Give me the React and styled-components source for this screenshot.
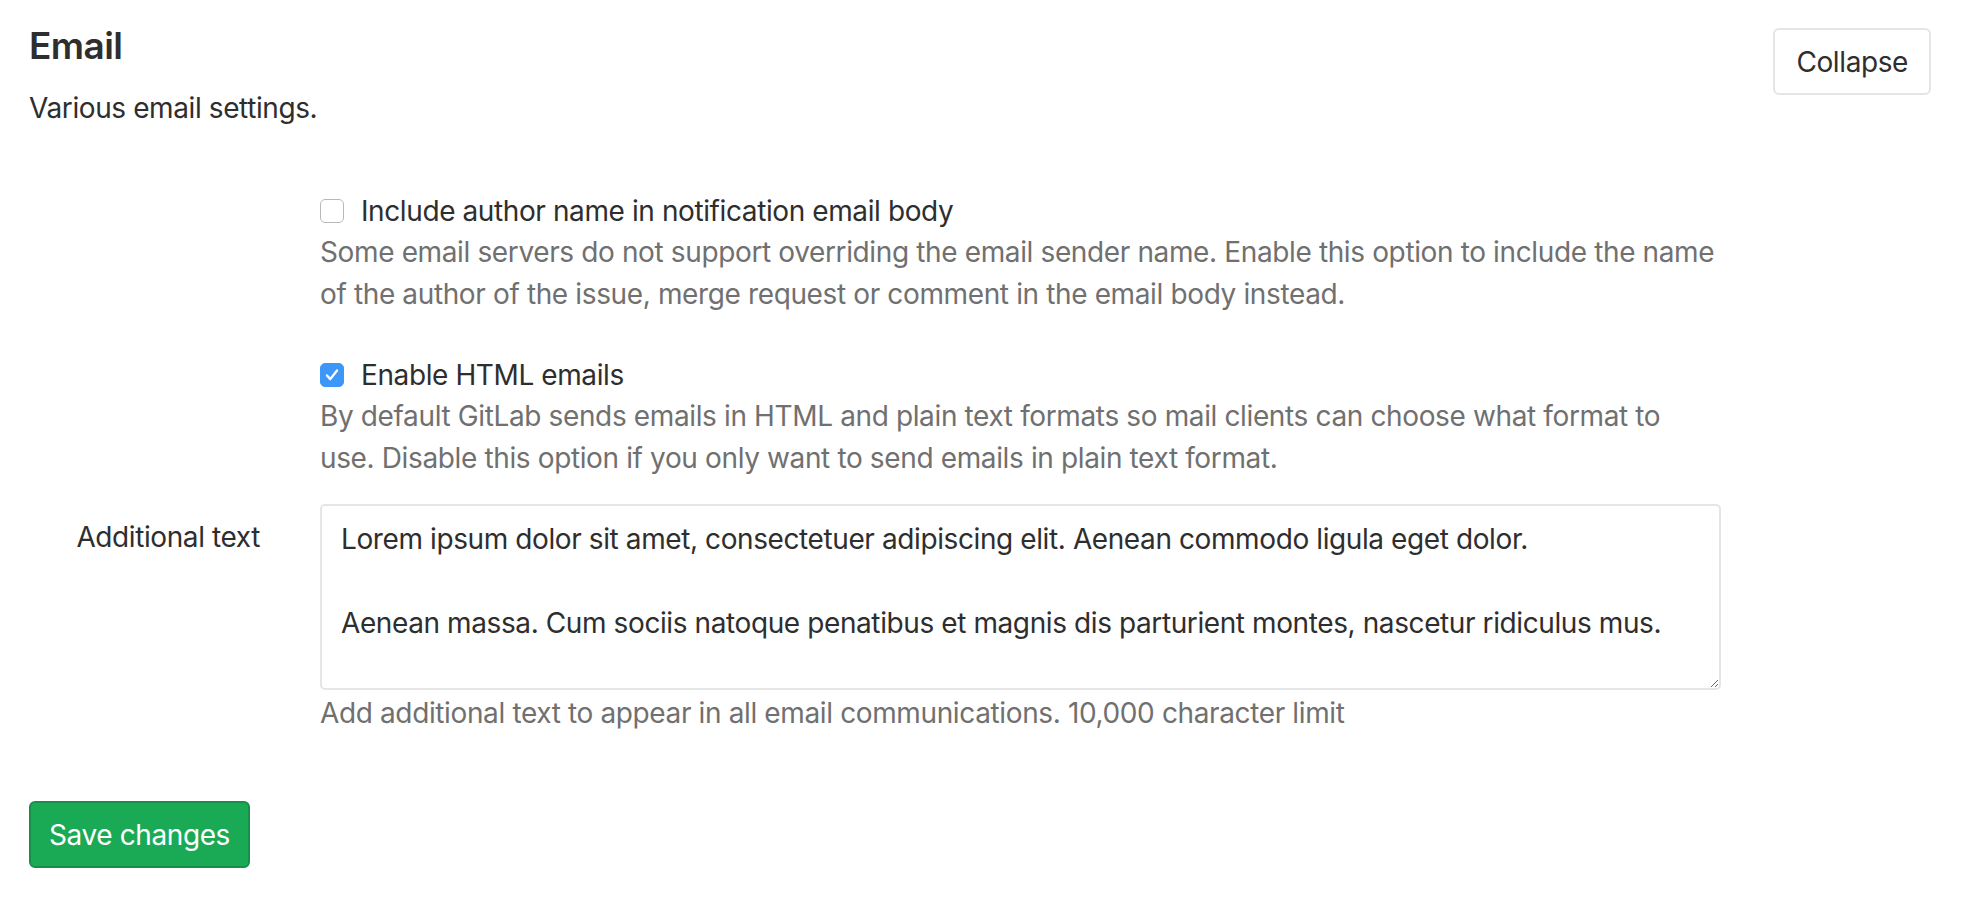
import React from 'react';
import styled, {createGlobalStyle} from 'styled-components';

const GlobalStyle = createGlobalStyle`
  body {
    margin: 0;
    background: #fff;
    font-family: Inter, "Liberation Sans", sans-serif;
    color: #2e2e2e;
  }
`;

const checkboxItems = [
  {
    id: 'author',
    label: 'Include author name in notification email body',
    help: 'Some email servers do not support overriding the email sender name. Enable this option to include the name of the author of the issue, merge request or comment in the email body instead.',
    checked: false,
    spacing: 40
  },
  {
    id: 'html',
    label: 'Enable HTML emails',
    help: 'By default GitLab sends emails in HTML and plain text formats so mail clients can choose what format to use. Disable this option if you only want to send emails in plain text format.',
    checked: true,
    spacing: 25
  }
];

const additionalText =
  'Lorem ipsum dolor sit amet, consectetuer adipiscing elit. Aenean commodo ligula eget dolor.\n\nAenean massa. Cum sociis natoque penatibus et magnis dis parturient montes, nascetur ridiculus mus.';

export default function App() {
  return (
    <>
      <GlobalStyle />
      <StyledPage>
        <StyledHeader>
          <div>
            <StyledTitle>Email</StyledTitle>
            <StyledDescription>Various email settings.</StyledDescription>
          </div>
          <StyledButton type="button">Collapse</StyledButton>
        </StyledHeader>

        <StyledForm>
          {checkboxItems.map(item => (
            <StyledRow key={item.id} spacing={item.spacing}>
              <span />
              <div>
                <StyledCheckLabel>
                  <StyledCheckbox type="checkbox" defaultChecked={item.checked} />
                  {item.label}
                </StyledCheckLabel>
                <StyledHelp>{item.help}</StyledHelp>
              </div>
            </StyledRow>
          ))}

          <StyledRow spacing={0}>
            <StyledFieldLabel htmlFor="additional-text">Additional text</StyledFieldLabel>
            <div>
              <StyledTextarea id="additional-text" defaultValue={additionalText} />
              <StyledHelp>Add additional text to appear in all email communications. 10,000 character limit</StyledHelp>
            </div>
          </StyledRow>
        </StyledForm>

        <StyledSaveButton type="submit">Save changes</StyledSaveButton>
      </StyledPage>
    </>
  );
}

const StyledPage = styled.div`
  padding: 24px 39px 40px 29px;
  font-size: 28px;
  line-height: 1.5;
  letter-spacing: -0.4px;
`;

const StyledHeader = styled.div`
  display: flex;
  justify-content: space-between;
  align-items: flex-start;
`;

const StyledTitle = styled.h4`
  margin: 0;
  font-size: 37px;
  font-weight: 600;
  line-height: 1.2;
  letter-spacing: -0.6px;
  color: #2e2e2e;
`;

const StyledDescription = styled.p`
  margin: 19px 0 0;
  color: #2e2e2e;
`;

const StyledButton = styled.button`
  margin-top: 4px;
  height: 67px;
  padding: 0 21px;
  font: inherit;
  font-size: 28px;
  letter-spacing: -0.4px;
  color: #2e2e2e;
  background: #fff;
  border: 2px solid #e5e5e5;
  border-radius: 6px;
`;

const StyledForm = styled.div`
  margin-top: 62px;
  display: flex;
  flex-direction: column;
`;

const StyledRow = styled.div`
  display: grid;
  grid-template-columns: 231px 1401px;
  column-gap: 60px;
  margin-bottom: ${props => props.spacing}px;
`;

const StyledCheckLabel = styled.label`
  display: flex;
  align-items: center;
  gap: 17px;
  line-height: 40px;
  color: #2e2e2e;
`;

const StyledCheckbox = styled.input`
  appearance: none;
  margin: 0;
  width: 24px;
  height: 24px;
  flex: none;
  border: 1.5px solid #b8b8b8;
  border-radius: 5px;
  background: #fff;

  &:checked {
    border-color: #3d97f8;
    background: #3d97f8
      url("data:image/svg+xml,%3Csvg xmlns='http://www.w3.org/2000/svg' viewBox='0 0 24 24'%3E%3Cpath d='M6.5 12.5l3.6 4L17.5 7' fill='none' stroke='white' stroke-width='2.6' stroke-linecap='round' stroke-linejoin='round'/%3E%3C/svg%3E")
      center / 100% no-repeat;
  }
`;

const StyledHelp = styled.p`
  margin: 0;
  max-width: 1397px;
  letter-spacing: -0.37px;
  color: #707070;
`;

const StyledFieldLabel = styled.label`
  padding-top: 12px;
  text-align: right;
  color: #2e2e2e;
`;

const StyledTextarea = styled.textarea`
  display: block;
  box-sizing: border-box;
  width: 100%;
  height: 186px;
  margin: 0 0 2px;
  padding: 12px 19px;
  font: inherit;
  letter-spacing: -0.4px;
  color: #2e2e2e;
  border: 2px solid #e5e5e5;
  border-radius: 5px;
  outline: none;
`;

const StyledSaveButton = styled.button`
  margin-top: 67px;
  height: 67px;
  padding: 0 18px;
  font: inherit;
  font-size: 28px;
  letter-spacing: -0.4px;
  color: #fff;
  background: #1aaa55;
  border: 2px solid #168f48;
  border-radius: 6px;
`;
